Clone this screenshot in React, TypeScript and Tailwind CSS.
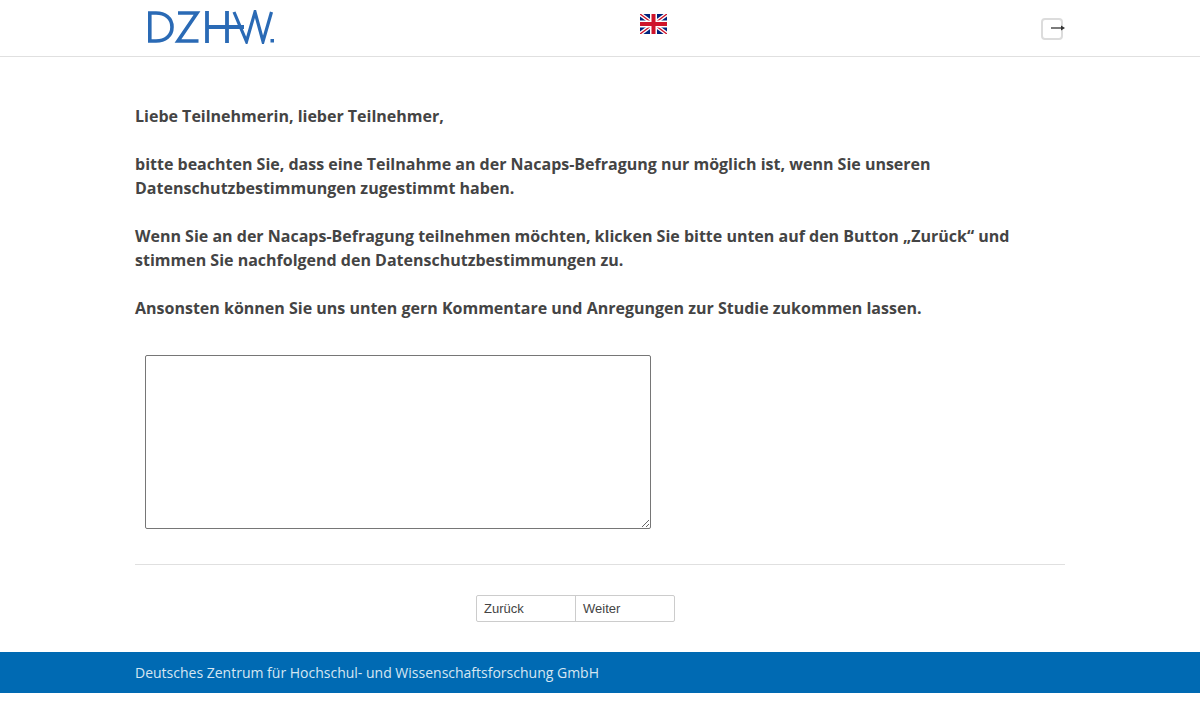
import React from "react"

const Logo = () => (
  <svg width="128" height="34" viewBox="0 0 128 34" className="block" fill="none" stroke="#2a6ab5" strokeWidth="3.600">
    {/* D */}
    <path d="M2.800 3V31H9C18 31 25 26 25 17C25 8 18 3 9 3Z" />
    {/* Z */}
    <path d="M31 3H50L31 31H51.500" />
    {/* H with long bar */}
    <path d="M60 1V33M80 1V33M60 17H97" strokeWidth="3.800" />
    {/* W */}
    <path d="M87 2L99.500 31.500L108 2L116 31.500L124.500 2" strokeWidth="3.200" />
    <rect x="123.500" y="29" width="3.500" height="3.500" fill="#2a6ab5" stroke="none" />
  </svg>
)

const Flag = () => (
  <svg width="27" height="20" viewBox="0 0 27 20" className="block">
    <rect width="27" height="20" fill="#00247d" />
    <path d="M0 0L27 20M27 0L0 20" stroke="#fff" strokeWidth="4" />
    <path d="M0 0L27 20M27 0L0 20" stroke="#cf142b" strokeWidth="1.400" />
    <path d="M13.500 0V20M0 10H27" stroke="#fff" strokeWidth="7" />
    <path d="M13.500 0V20M0 10H27" stroke="#cf142b" strokeWidth="4" />
  </svg>
)

const Logout = () => (
  <div className="relative w-[22px] h-[22px] rounded-[4px] border-2 border-[#dcdcdc]">
    <svg width="16" height="8" viewBox="0 0 16 8" className="absolute left-[8px] top-[4px]">
      <path d="M0 4H11" stroke="#333" strokeWidth="1.300" />
      <path d="M10 1.500L14 4L10 6.500Z" fill="#333" />
    </svg>
  </div>
)

export default function App() {
  return (
    <div className="min-h-[702px] bg-white font-['Open_Sans',sans-serif] text-[#333]">
      {/* header */}
      <div className="h-[57px] border-b border-[#e0e0e0]">
        <div className="mx-auto w-[930px] h-full flex items-start relative">
          <div className="ml-[12px] mt-[10px]"><Logo /></div>
          <div className="ml-[365px] mt-[14px]"><Flag /></div>
          <div className="ml-auto mt-[18px] mr-[2px]"><Logout /></div>
        </div>
      </div>

      <div className="mx-auto w-[930px]">
        <div className="pt-[47px] text-[16px] leading-[24px] font-bold text-[#444]">
          <p>Liebe Teilnehmerin, lieber Teilnehmer,</p>
          <p className="mt-[24px]">bitte beachten Sie, dass eine Teilnahme an der Nacaps-Befragung nur möglich ist, wenn Sie unseren<br />Datenschutzbestimmungen zugestimmt haben.</p>
          <p className="mt-[24px]">Wenn Sie an der Nacaps-Befragung teilnehmen möchten, klicken Sie bitte unten auf den Button „Zurück“ und<br />stimmen Sie nachfolgend den Datenschutzbestimmungen zu.</p>
          <p className="mt-[24px]">Ansonsten können Sie uns unten gern Kommentare und Anregungen zur Studie zukommen lassen.</p>
        </div>

        <div className="pl-[10px] pt-[35px]">
          <textarea className="block w-[506px] h-[174px] border border-[#767676] rounded-[2px] bg-white resize" />
        </div>

        <div className="mt-[35px] border-t border-[#e0e0e0] pt-[30px] pb-[30px] pl-[341px]">
          <div className="flex w-[199px] h-[27px] border border-[#ccc] rounded-[2px] font-['Liberation_Sans',sans-serif] text-[13px] text-[#444]">
            <button className="w-[99px] h-full text-left pl-[7px] border-r border-[#ccc]">Zurück</button>
            <button className="flex-1 h-full text-left pl-[7px]">Weiter</button>
          </div>
        </div>
      </div>

      {/* footer */}
      <div className="h-[41px] bg-[#006ab3]">
        <div className="mx-auto w-[930px] h-full flex items-center text-[14px] text-[#d5e6f2]">
          Deutsches Zentrum für Hochschul- und Wissenschaftsforschung GmbH
        </div>
      </div>
    </div>
  )
}
